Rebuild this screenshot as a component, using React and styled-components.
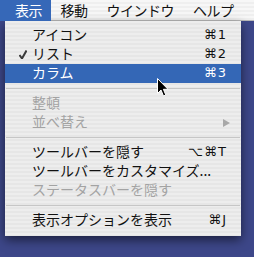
import React from 'react'
import styled, { createGlobalStyle } from 'styled-components'

const GlobalStyle = createGlobalStyle`
html, body {
    margin: 0;
    padding: 0;
    background: #3d4789;
}
`

const Desktop = styled.div`
position: relative;
width: 254px;
height: 257px;
overflow: hidden;
background: #3d4789;
font-family: "Noto Sans CJK JP", "DejaVu Sans", sans-serif;
font-size: 14px;
`

const MenuBar = styled.div`
display: flex;
height: 21px;
background: repeating-linear-gradient(
    to bottom,
    #f7f7f7 0px,
    #f7f7f7 2px,
    #efefef 2px,
    #efefef 4px
);
border-bottom: 1px solid #b9b9b9;
box-sizing: border-box;
`

const BarItem = styled.div`
height: 21px;
line-height: 20px;
padding: ${props => props.first ? '0 9px 0 15px' : '0 9.5px'};
letter-spacing: -0.5px;
color: ${props => props.active ? '#ffffff' : '#111111'};
background: ${props => props.active ? '#3668b8' : 'transparent'};
white-space: nowrap;
`

const Menu = styled.div`
width: 236px;
margin-left: 5px;
padding: 5px 0 6px;
background: repeating-linear-gradient(
    to bottom,
    #ededed 0px,
    #ededed 2px,
    #e6e6e6 2px,
    #e6e6e6 4px
);
box-shadow: 0 4px 10px rgba(0, 0, 0, 0.55);
`

const Row = styled.div`
display: flex;
align-items: center;
height: 19px;
line-height: 19px;
padding: 0 14px 0 0;
color: ${props => props.disabled ? '#a3a3a3' : props.selected ? '#ffffff' : '#111111'};
background: ${props => props.selected ? '#3467b6' : 'transparent'};
white-space: nowrap;
`

const Mark = styled.span`
width: 22px;
display: flex;
justify-content: flex-end;
padding-right: 5px;
box-sizing: content-box;
`

const Label = styled.span`
flex: 1;
position: relative;
top: -1px;
`

const Key = styled.span`
font-family: "DejaVu Sans", sans-serif;
font-size: 13px;
letter-spacing: 1px;
position: relative;
top: -1px;
`

const Arrow = styled.span`
width: 0;
height: 0;
margin-right: -3px;
border-top: 4px solid transparent;
border-bottom: 4px solid transparent;
border-left: 7px solid #a8a8a8;
`

const Separator = styled.div`
height: 11px;
display: flex;
align-items: center;
padding: 0 1px;
&::after {
    content: '';
    flex: 1;
    height: 1px;
    background: #c6c6c6;
}
`

const Cursor = styled.svg`
position: absolute;
left: 157px;
top: 78px;
`

const Check = () => (
    <svg width="8" height="9" viewBox="0 0 8 9">
        <path d="M0.5 5 L3 8.5 L7.5 0.5" fill="none" stroke="#3a3a3a" strokeWidth="2" />
    </svg>
)

const items = [
    { label: 'アイコン', key: '⌘1' },
    { label: 'リスト', key: '⌘2', checked: true },
    { label: 'カラム', key: '⌘3', selected: true },
    'sep',
    { label: '整頓', disabled: true },
    { label: '並べ替え', disabled: true, submenu: true },
    'sep',
    { label: 'ツールバーを隠す', key: '⌥⌘T' },
    { label: 'ツールバーをカスタマイズ...' },
    { label: 'ステータスバーを隠す', disabled: true },
    'sep',
    { label: '表示オプションを表示', key: '⌘J' },
]

const App = () => {
    return (
        <Desktop>
            <GlobalStyle />
            <MenuBar>
                <BarItem first active>表示</BarItem>
                <BarItem>移動</BarItem>
                <BarItem>ウインドウ</BarItem>
                <BarItem>ヘルプ</BarItem>
            </MenuBar>
            <Menu>
                {items.map((item, i) =>
                    item === 'sep' ? (
                        <Separator key={i} />
                    ) : (
                        <Row key={i} disabled={item.disabled} selected={item.selected}>
                            <Mark>{item.checked && <Check />}</Mark>
                            <Label>{item.label}</Label>
                            {item.key && <Key>{item.key}</Key>}
                            {item.submenu && <Arrow />}
                        </Row>
                    )
                )}
            </Menu>
            <Cursor width="12" height="19" viewBox="0 0 12 19">
                <path d="M0.5 0.5 L0.5 15.5 L4 12 L6.5 18 L8.8 17 L6.4 11.3 L11 11.3 Z" fill="#000" stroke="#fff" strokeWidth="1" />
            </Cursor>
        </Desktop>
    )
}

export default App
